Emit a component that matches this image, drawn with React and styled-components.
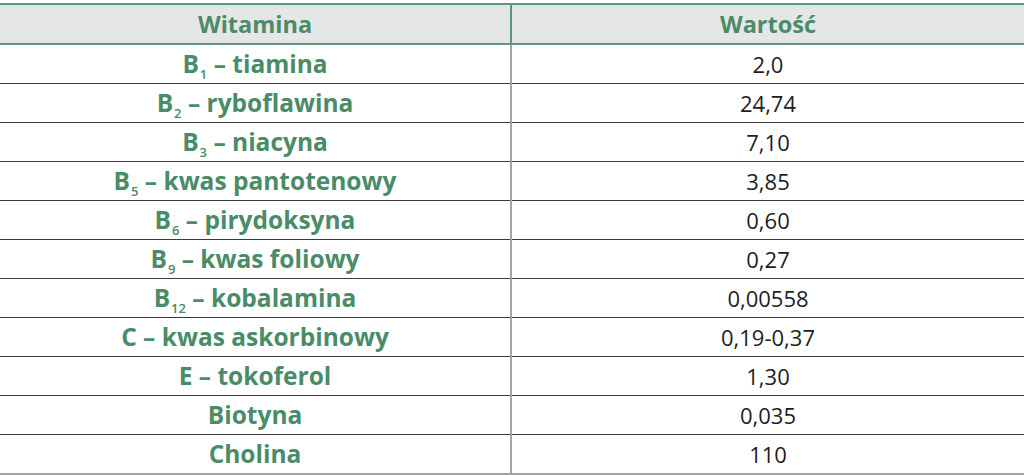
import React from "react";
import styled, { createGlobalStyle } from "styled-components";

const GlobalStyle = createGlobalStyle`
  html, body {
    margin: 0;
    padding: 0;
    background: #ffffff;
  }
  body {
    font-family: "Open Sans", "Noto Sans", sans-serif;
  }
`;

const rows = [
  { name: "B", sub: "1", rest: "tiamina", value: "2,0" },
  { name: "B", sub: "2", rest: "ryboflawina", value: "24,74" },
  { name: "B", sub: "3", rest: "niacyna", value: "7,10" },
  { name: "B", sub: "5", rest: "kwas pantotenowy", value: "3,85" },
  { name: "B", sub: "6", rest: "pirydoksyna", value: "0,60" },
  { name: "B", sub: "9", rest: "kwas foliowy", value: "0,27" },
  { name: "B", sub: "12", rest: "kobalamina", value: "0,00558" },
  { name: "C", rest: "kwas askorbinowy", value: "0,19-0,37" },
  { name: "E", rest: "tokoferol", value: "1,30" },
  { name: "Biotyna", value: "0,035" },
  { name: "Cholina", value: "110" },
];

const Page = styled.div`
  width: 1024px;
  height: 475px;
  padding-top: 3px;
  box-sizing: border-box;
`;

const Table = styled.table`
  width: 100%;
  border-collapse: collapse;
  table-layout: fixed;
  border-top: 2px solid #5b9878;
  border-bottom: 2px solid #a2a2a2;
`;

const HeadCell = styled.th`
  height: 38px;
  padding: 0;
  background: #e5e6e7;
  border-bottom: 2px solid #5b9878;
  border-left: ${(p) => (p.$divider ? "2px solid #5b9878" : "none")};
  color: #4a8b68;
  font-size: 23.5px;
  font-weight: 700;
  text-align: center;
  vertical-align: middle;
`;

const Row = styled.tr`
  & + & td {
    border-top: 1px solid #3a3a3a;
  }
`;

const NameCell = styled.td`
  height: 38px;
  padding: 0;
  color: #4a8b68;
  font-size: 24.5px;
  font-weight: 700;
  text-align: center;
  vertical-align: middle;
  line-height: 1;
`;

const ValueCell = styled.td`
  height: 38px;
  padding: 0;
  border-left: 2px solid #a2a2a2;
  color: #1e1e1e;
  font-size: 22px;
  font-weight: 400;
  text-align: center;
  vertical-align: middle;
  line-height: 1;
`;

const Sub = styled.sub`
  font-size: 13px;
  font-weight: 600;
  vertical-align: -6px;
  line-height: 0;
  margin-left: 1px;
`;

export default function App() {
  return (
    <Page>
      <GlobalStyle />
      <Table>
        <colgroup>
          <col style={{ width: 511 }} />
          <col />
        </colgroup>
        <thead>
          <tr>
            <HeadCell>Witamina</HeadCell>
            <HeadCell $divider>Wartość</HeadCell>
          </tr>
        </thead>
        <tbody>
          {rows.map((r) => (
            <Row key={r.name + (r.sub || "") + (r.rest || "")}>
              <NameCell>
                {r.name}
                {r.sub && <Sub>{r.sub}</Sub>}
                {r.rest && <> – {r.rest}</>}
              </NameCell>
              <ValueCell>{r.value}</ValueCell>
            </Row>
          ))}
        </tbody>
      </Table>
    </Page>
  );
}
